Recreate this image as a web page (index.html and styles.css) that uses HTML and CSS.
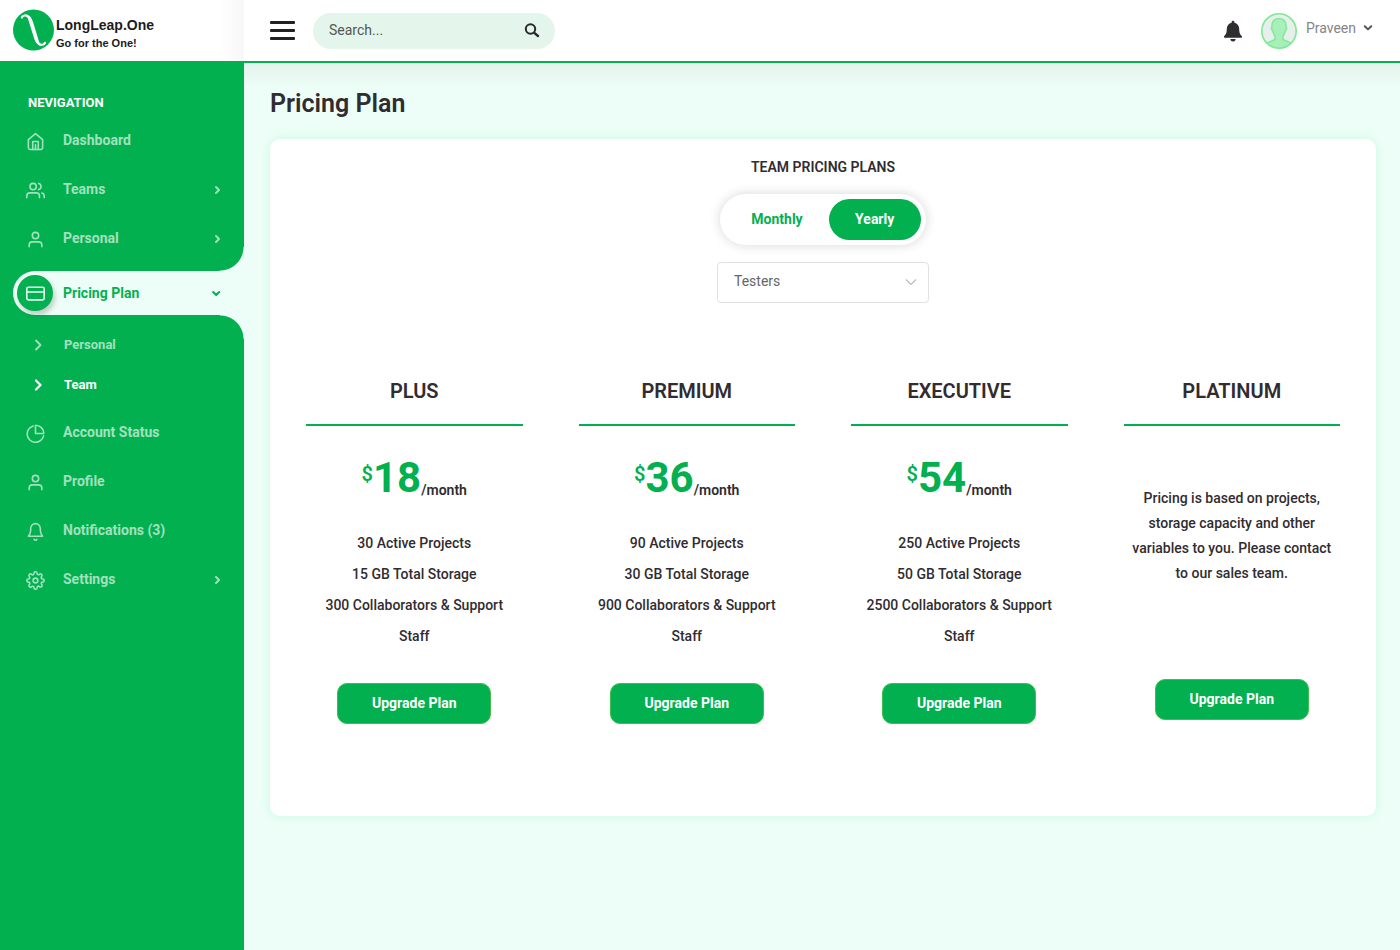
FILE: index.html
```html
<!DOCTYPE html>
<html lang="en">
<head>
<meta charset="utf-8">
<meta name="viewport" content="width=device-width, initial-scale=1">
<title>Pricing Plan - LongLeap.One</title>
<link rel="stylesheet" href="styles.css">
</head>
<body>
<header class="topbar">
  <a class="brand" href="#">
    <svg class="brand-mark" viewBox="0 0 42 42" width="42" height="42" aria-hidden="true">
      <circle cx="21.500" cy="21" r="20.5" fill="#02b050"/>
      <path d="M9.800 8.500C11 6 14 6 16 7.500M27 35C29 36.500 32 36 33 33.800" fill="none" stroke="#fff" stroke-width="2.200" stroke-linecap="round"/>
      <path d="M13.500 6C18 6 19.500 8.500 21 13L26.500 31C27.200 33.500 28 35 30 36C26 36.800 23.800 34.500 22.300 30L17 13C16 9.500 15.500 7.500 13.500 6Z" fill="#fff"/>
    </svg>
    <span class="brand-text">
      <span class="brand-name">LongLeap.One</span>
      <span class="brand-tag">Go for the One!</span>
    </span>
  </a>
  <div class="topbar-main">
    <button class="menu-toggle" type="button" aria-label="Toggle menu"><span></span><span></span><span></span></button>
    <form class="search" role="search">
      <input class="search-input" type="text" placeholder="Search..." aria-label="Search">
      <button class="search-button" type="button" aria-label="Search">
        <svg viewBox="0 0 16 16" width="16" height="16"><circle cx="6.500" cy="6" r="4.700" fill="none" stroke="#2a282b" stroke-width="2"/><path d="M10.300 9.800L14 13" stroke="#2a282b" stroke-width="2.400" stroke-linecap="round"/></svg>
      </button>
    </form>
    <div class="account">
      <button class="bell" type="button" aria-label="Notifications">
        <svg viewBox="0 0 20 22" width="20" height="22"><path d="M10 .8c.8 0 1.400.6 1.400 1.300v.6c3 .7 4.800 3.100 4.800 6.300 0 4.600 1.400 5.800 2.500 6.900.6.7.3 1.900-.9 1.900H2.200c-1.200 0-1.500-1.200-.9-1.900 1.100-1.100 2.500-2.300 2.500-6.900 0-3.200 1.800-5.600 4.800-6.300v-.6C8.600 1.400 9.200.8 10 .8zM7.400 19h5.200a2.600 2.400 0 0 1-5.200 0z" fill="#302c31"/></svg>
      </button>
      <button class="user" type="button">
        <svg class="avatar" viewBox="0 0 36 36" width="36" height="36" aria-hidden="true">
          <defs><clipPath id="avatar-clip"><circle cx="18" cy="18" r="17"/></clipPath></defs>
          <circle cx="18" cy="18" r="17" fill="#e6efe9"/>
          <path clip-path="url(#avatar-clip)" d="M18 5.500c5 0 7.300 3.200 7 8.200.9.500.6 3.600-.8 4.400-.4 2.100-1.200 3.700-2.200 4.800v3.300c1.500 2 6.500 2.300 9 5V37H5v-5.800c2.500-2.700 7.500-3 9-5v-3.300c-1-1.100-1.800-2.700-2.200-4.800-1.400-.8-1.700-3.900-.8-4.400-.3-5 2-8.200 7-8.200z" fill="#a9efb9" stroke="#81eb9b" stroke-width="1.600"/>
          <circle cx="18" cy="18" r="17.200" fill="none" stroke="#7de996" stroke-width="1.600"/>
        </svg>
        <span>Praveen</span>
        <svg class="user-caret" viewBox="0 0 10 8" width="10" height="8"><path d="M1.800 2.200L5 5.400L8.200 2.200" fill="none" stroke="#555" stroke-width="2" stroke-linecap="round" stroke-linejoin="round"/></svg>
      </button>
    </div>
  </div>
</header>

<div class="shell">
  <nav class="sidebar" aria-label="Main">
    <h2 class="nav-title">NEVIGATION</h2>
    <a class="nav-item" href="#">
      <svg class="nav-icon" viewBox="0 0 24 24"><path d="M3 9.500L12 2l9 7.500V20a2 2 0 0 1-2 2H5a2 2 0 0 1-2-2z"/><path d="M8.500 22V12h7v10M12 22v-6"/></svg>
      <span class="nav-label">Dashboard</span>
    </a>
    <a class="nav-item" href="#">
      <svg class="nav-icon" viewBox="0 0 24 24"><path d="M17 21v-2a4 4 0 0 0-4-4H5a4 4 0 0 0-4 4v2"/><circle cx="9" cy="7" r="4"/><path d="M23 21v-2a4 4 0 0 0-3-3.870M16 3.130a4 4 0 0 1 0 7.750"/></svg>
      <span class="nav-label">Teams</span>
      <svg class="nav-caret" viewBox="0 0 10 10"><path d="M4 2L7 5L4 8"/></svg>
    </a>
    <a class="nav-item" href="#">
      <svg class="nav-icon" viewBox="0 0 24 24"><path d="M20 21v-2a4 4 0 0 0-4-4H8a4 4 0 0 0-4 4v2"/><circle cx="12" cy="7" r="4"/></svg>
      <span class="nav-label">Personal</span>
      <svg class="nav-caret" viewBox="0 0 10 10"><path d="M4 2L7 5L4 8"/></svg>
    </a>
    <a class="nav-item nav-item-active" href="#" aria-current="page">
      <span class="nav-badge"><svg class="nav-icon" viewBox="0 0 24 24"><rect x="1" y="4" width="22" height="16" rx="2"/><path d="M1 10h22"/></svg></span>
      <span class="nav-label">Pricing Plan</span>
      <svg class="nav-caret" viewBox="0 0 10 10"><path d="M2.200 4L5.200 7L8.200 4"/></svg>
    </a>
    <div class="subnav">
      <a class="sub-item" href="#"><svg class="sub-icon" viewBox="0 0 12 12"><path d="M4 1.500L8.500 6L4 10.500"/></svg>Personal</a>
      <a class="sub-item sub-item-active" href="#"><svg class="sub-icon" viewBox="0 0 12 12"><path d="M4 1.500L8.500 6L4 10.500"/></svg>Team</a>
    </div>
    <a class="nav-item" href="#">
      <svg class="nav-icon" viewBox="0 0 24 24"><path d="M9 2.500A10.500 10.500 0 1 0 22.200 15"/><path d="M22.500 12A10.500 10.500 0 0 0 12 1.500V12z"/></svg>
      <span class="nav-label">Account Status</span>
    </a>
    <a class="nav-item" href="#">
      <svg class="nav-icon" viewBox="0 0 24 24"><path d="M20 21v-2a4 4 0 0 0-4-4H8a4 4 0 0 0-4 4v2"/><circle cx="12" cy="7" r="4"/></svg>
      <span class="nav-label">Profile</span>
    </a>
    <a class="nav-item" href="#">
      <svg class="nav-icon" viewBox="0 0 24 24"><path d="M18 8A6 6 0 0 0 6 8c0 7-3 10-3 10h18s-3-3-3-10M13.730 22a2 2 0 0 1-3.460 0"/></svg>
      <span class="nav-label">Notifications (3)</span>
    </a>
    <a class="nav-item" href="#">
      <svg class="nav-icon" viewBox="0 0 24 24"><circle cx="12" cy="12" r="3"/><path d="M19.400 15a1.650 1.650 0 0 0 .33 1.820l.06.06a2 2 0 0 1 0 2.830 2 2 0 0 1-2.830 0l-.06-.06a1.650 1.650 0 0 0-1.820-.33 1.650 1.650 0 0 0-1 1.510V21a2 2 0 0 1-4 0v-.09A1.650 1.650 0 0 0 9 19.400a1.650 1.650 0 0 0-1.820.33l-.06.06a2 2 0 0 1-2.830-2.830l.06-.06a1.650 1.650 0 0 0 .33-1.820 1.650 1.650 0 0 0-1.510-1H3a2 2 0 0 1 0-4h.09A1.650 1.650 0 0 0 4.600 9a1.650 1.650 0 0 0-.33-1.820l-.06-.06a2 2 0 0 1 2.830-2.830l.06.06a1.650 1.650 0 0 0 1.820.33H9a1.650 1.650 0 0 0 1-1.510V3a2 2 0 0 1 4 0v.09a1.650 1.650 0 0 0 1 1.510 1.650 1.650 0 0 0 1.820-.33l.06-.06a2 2 0 0 1 2.830 2.830l-.06.06a1.650 1.650 0 0 0-.33 1.820V9a1.650 1.650 0 0 0 1.510 1H21a2 2 0 0 1 0 4h-.09a1.650 1.650 0 0 0-1.510 1z"/></svg>
      <span class="nav-label">Settings</span>
      <svg class="nav-caret" viewBox="0 0 10 10"><path d="M4 2L7 5L4 8"/></svg>
    </a>
  </nav>

  <main class="content">
    <h1 class="page-title">Pricing Plan</h1>
    <section class="card">
      <h2 class="card-title">TEAM PRICING PLANS</h2>
      <div class="period">
        <button class="period-option" type="button" aria-pressed="false">Monthly</button>
        <button class="period-option period-option-on" type="button" aria-pressed="true">Yearly</button>
      </div>
      <div class="picker">
        <select class="picker-select" aria-label="Team type"><option>Testers</option></select>
        <svg class="picker-caret" viewBox="0 0 12 8" width="12" height="8"><path d="M1 1.500L6 6.500L11 1.500" fill="none" stroke="#b9bcbe" stroke-width="1.200"/></svg>
      </div>
      <div class="plans">
        <article class="plan">
          <h3 class="plan-name">PLUS</h3>
          <p class="price"><span class="currency">$</span><span class="amount">18</span><span class="per">/month</span></p>
          <ul class="features"><li>30 Active Projects</li><li>15 GB Total Storage</li><li>300 Collaborators &amp; Support Staff</li></ul>
          <button class="upgrade" type="button">Upgrade Plan</button>
        </article>
        <article class="plan">
          <h3 class="plan-name">PREMIUM</h3>
          <p class="price"><span class="currency">$</span><span class="amount">36</span><span class="per">/month</span></p>
          <ul class="features"><li>90 Active Projects</li><li>30 GB Total Storage</li><li>900 Collaborators &amp; Support Staff</li></ul>
          <button class="upgrade" type="button">Upgrade Plan</button>
        </article>
        <article class="plan">
          <h3 class="plan-name">EXECUTIVE</h3>
          <p class="price"><span class="currency">$</span><span class="amount">54</span><span class="per">/month</span></p>
          <ul class="features"><li>250 Active Projects</li><li>50 GB Total Storage</li><li>2500 Collaborators &amp; Support Staff</li></ul>
          <button class="upgrade" type="button">Upgrade Plan</button>
        </article>
        <article class="plan">
          <h3 class="plan-name">PLATINUM</h3>
          <p class="plan-note">Pricing is based on projects, storage capacity and other variables to you. Please contact to our sales team.</p>
          <button class="upgrade" type="button">Upgrade Plan</button>
        </article>
      </div>
    </section>
  </main>
</div>
</body>
</html>
```

FILE: styles.css
```css
:root {
  --green: #02b050;
  --mint: #ecfef7;
  --ink: #302c31;
  --muted: #a3e1bd;
}

* { box-sizing: border-box; }

body {
  margin: 0;
  min-height: 100vh;
  display: flex;
  flex-direction: column;
  background: var(--mint);
  color: var(--ink);
  font: 14px/20px Roboto, "Liberation Sans", sans-serif;
}

h1, h2, h3, p, ul { margin: 0; padding: 0; }
a { text-decoration: none; color: inherit; }
button, input, select { font: inherit; color: inherit; }
button { border: 0; padding: 0; background: none; cursor: pointer; }
svg { display: block; flex: none; }

/* Top bar */
.topbar {
  display: flex;
  height: 63px;
  background: #fff;
  border-bottom: 2px solid var(--green);
}

.brand {
  display: flex;
  flex: none;
  width: 244px;
  padding: 9px 12px;
  background: linear-gradient(to left, #f7f7f7, #fff 24px);
}

.brand-text {
  display: flex;
  flex-direction: column;
  padding: 7px 2px;
  color: #1c1c1c;
  font-family: "Liberation Sans", Arial, sans-serif;
  font-weight: 700;
}

.brand-name { font-size: 14px; line-height: 19px; }
.brand-tag { font-size: 11px; line-height: 16px; }

.topbar-main {
  display: flex;
  flex: 1;
  align-items: center;
  padding: 0 27px 0 26px;
}

.menu-toggle {
  display: grid;
  gap: 5px;
  width: 25px;
  margin-right: 18px;
}

.menu-toggle span { height: 3px; border-radius: 1px; background: #222; }

.search {
  display: flex;
  align-items: center;
  width: 242px;
  height: 36px;
  padding: 0 15px 0 16px;
  border-radius: 18px;
  background: #e4f5ec;
}

.search-input {
  flex: 1;
  min-width: 0;
  padding: 0 0 2px;
  border: 0;
  outline: 0;
  background: none;
}

.search-input::placeholder { color: #555; opacity: 1; }

.account {
  display: flex;
  align-items: center;
  gap: 18px;
  margin-left: auto;
}

.user {
  display: flex;
  align-items: center;
  color: #858585;
}

.avatar { margin-right: 9px; }
.user-caret { margin-left: 7px; }
.user span, .user-caret { margin-bottom: 5px; }

/* Sidebar */
.shell { display: flex; flex: 1; }

.sidebar {
  flex: none;
  width: 244px;
  padding: 30px 0;
  background: var(--green);
  color: var(--muted);
  font-weight: 700;
}

.nav-title {
  padding: 0 28px 3px;
  color: #fff;
  font-size: 13px;
  line-height: 20px;
  font-weight: 700;
}

.nav-item {
  display: flex;
  align-items: center;
  height: 49px;
  padding: 0 22px 0 26px;
}

.nav-icon, .nav-caret, .sub-icon {
  fill: none;
  stroke: currentColor;
  stroke-linecap: round;
  stroke-linejoin: round;
}

.nav-icon { width: 19px; height: 19px; margin: 2px 18px 0 0; stroke-width: 2; }
.nav-label { flex: 1; padding-bottom: 1px; }
.nav-caret { width: 10px; height: 10px; stroke-width: 2; }

.nav-item-active {
  position: relative;
  height: 44px;
  margin: 8px 0 10px 13px;
  padding: 0 23px 0 4px;
  border-radius: 22px 0 0 22px;
  background: var(--mint);
  color: var(--green);
}

.nav-item-active::before,
.nav-item-active::after {
  content: "";
  position: absolute;
  right: 0;
  width: 24px;
  height: 24px;
}

.nav-item-active::before {
  bottom: 100%;
  background: radial-gradient(circle at 0 0, transparent 23px, var(--mint) 24px);
}

.nav-item-active::after {
  top: 100%;
  background: radial-gradient(circle at 0 100%, transparent 23px, var(--mint) 24px);
}

.nav-badge {
  display: grid;
  place-items: center;
  width: 36px;
  height: 36px;
  margin-right: 10px;
  border-radius: 50%;
  background: var(--green);
  color: #e6fff2;
  box-shadow: 2px 4px 5px rgba(60, 60, 60, .25);
}

.nav-badge .nav-icon { margin: 0; }

.sub-item {
  display: flex;
  align-items: center;
  height: 40px;
  padding: 0 32px;
  font-size: 13px;
}

.sub-icon { width: 12px; height: 12px; margin-right: 20px; stroke-width: 1.800; }
.sub-item-active { color: #fff; }
.sub-item-active .sub-icon { stroke-width: 2.200; }
.subnav { margin-bottom: 3px; }

/* Content */
.content {
  flex: 1;
  min-width: 0;
  padding: 25px 24px 24px 26px;
  background: linear-gradient(#e4f4ec, var(--mint) 26px);
}

.page-title {
  margin-bottom: 19px;
  font-size: 25px;
  line-height: 32px;
  font-weight: 600;
}

.card {
  display: flex;
  flex-direction: column;
  align-items: center;
  padding: 18px 8px 92px;
  border-radius: 10px;
  background: #fff;
  box-shadow: 0 0 10px rgba(80, 220, 160, .2);
}

.card-title { font-size: 14px; line-height: 20px; font-weight: 600; }

.period {
  display: flex;
  margin-top: 17px;
  padding: 5px;
  border-radius: 26px;
  background: #fff;
  box-shadow: 0 0 12px rgba(0, 0, 0, .16);
}

.period-option {
  min-width: 92px;
  height: 41px;
  padding: 0 26px 2px;
  border-radius: 21px;
  color: var(--green);
  font-weight: 700;
}

.period-option-on { background: var(--green); color: #fff; }

.picker { position: relative; width: 212px; margin-top: 17px; }

.picker-select {
  width: 100%;
  height: 41px;
  padding: 0 16px 3px;
  border: 1px solid #dfe1e3;
  border-radius: 4px;
  appearance: none;
  background: #fff;
  color: #666;
}

.picker-caret { position: absolute; right: 12px; top: 16px; pointer-events: none; }

.plans {
  display: grid;
  grid-template-columns: repeat(4, 1fr);
  align-self: stretch;
  margin-top: 73px;
}

.plan {
  display: flex;
  flex-direction: column;
  align-items: center;
  padding: 0 28px;
  text-align: center;
}

.plan-name {
  align-self: stretch;
  padding-bottom: 18px;
  border-bottom: 2px solid var(--green);
  font-size: 20px;
  line-height: 30px;
  font-weight: 600;
}

.price {
  display: flex;
  justify-content: center;
  align-items: flex-end;
  height: 50px;
  margin: 27px 0 25px;
  font-weight: 600;
}

.currency { align-self: flex-start; padding-top: 9px; color: var(--green); font-size: 20px; line-height: 24px; }
.amount { color: var(--green); font-size: 42px; line-height: 50px; font-weight: 700; }
.per { line-height: 26px; }

.features { padding: 0 4px; list-style: none; font-weight: 500; line-height: 31px; }

.plan-note { margin-top: 60px; padding: 0 4px; font-weight: 500; line-height: 25px; }

.upgrade {
  width: 154px;
  height: 41px;
  margin-top: 31px;
  padding-bottom: 2px;
  border: 1px solid #3cc04b;
  border-radius: 10px;
  background: var(--green);
  color: #fff;
  font-weight: 700;
}

.plan-note + .upgrade { margin-top: 93px; }
```
